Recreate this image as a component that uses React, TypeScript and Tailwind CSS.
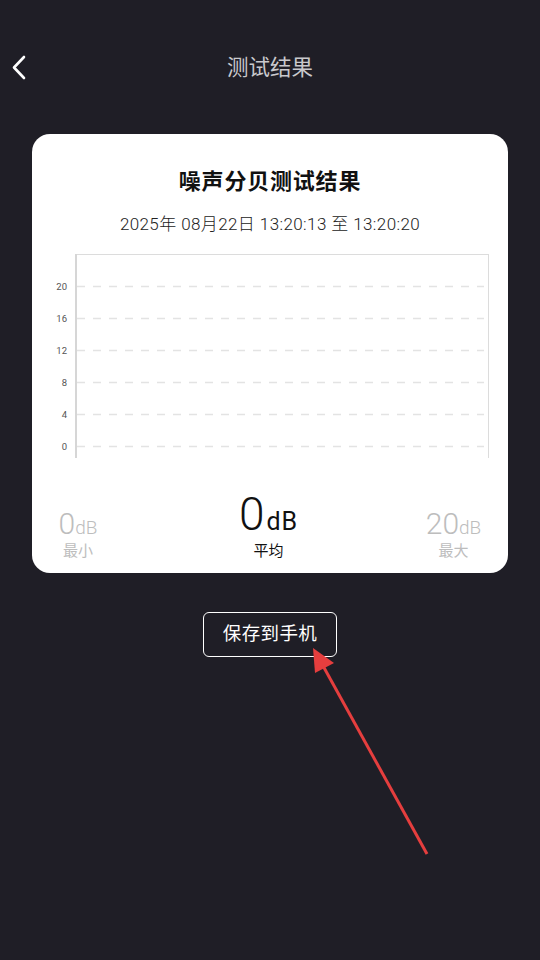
import React from "react";

const gridYs = [
  { v: "20", y: 36 },
  { v: "16", y: 68 },
  { v: "12", y: 100 },
  { v: "8", y: 132 },
  { v: "4", y: 164 },
  { v: "0", y: 196 },
];

function Chart() {
  return (
    <svg width="476" height="210" viewBox="0 0 476 210" className="block">
      <line x1="43.5" y1="4.5" x2="456.5" y2="4.5" stroke="#dcdcdc" strokeWidth="1" />
      <line x1="456.5" y1="4" x2="456.5" y2="208" stroke="#dcdcdc" strokeWidth="1" />
      <line x1="44" y1="4" x2="44" y2="208" stroke="#d6d6d6" strokeWidth="2" />
      {gridYs.map((g) => (
        <g key={g.v}>
          <line
            x1="45"
            y1={g.y + 0.5}
            x2="452"
            y2={g.y + 0.5}
            stroke="#e3e3e3"
            strokeWidth="1.5"
            strokeDasharray="8 8"
          />
          <text
            x="35"
            y={g.y + 3.5}
            textAnchor="end"
            fontSize="9.5"
            fill="#555555"
            fontFamily="Roboto, 'Liberation Sans', sans-serif"
          >
            {g.v}
          </text>
        </g>
      ))}
    </svg>
  );
}

export default function App() {
  return (
    <div
      className="relative w-[540px] h-[960px] bg-[#1f1e26] overflow-hidden"
      style={{ fontFamily: "Roboto, 'Noto Sans CJK SC', sans-serif" }}
    >
      {/* header */}
      <div className="relative pt-[48px] h-[88px]">
        <div className="absolute left-[11px] top-[54px]">
          <svg width="18" height="26" viewBox="0 0 18 26">
            <polyline
              points="13,3 3,13.5 13,24"
              fill="none"
              stroke="#ffffff"
              strokeWidth="2.6"
              strokeLinecap="round"
              strokeLinejoin="round"
            />
          </svg>
        </div>
        <div className="h-[40px] leading-[40px] text-center text-[21.5px] text-[#c9c9cd]">测试结果</div>
      </div>

      {/* card */}
      <div className="mx-auto mt-[46px] w-[476px] h-[439px] bg-white rounded-[18px] pt-[33px] flex flex-col">
        <div className="h-[30px] leading-[30px] text-center text-[22px] tracking-[0.8px] font-bold text-[#111111]">
          噪声分贝测试结果
        </div>
        <div className="mt-[15px] h-[24px] leading-[24px] text-center text-[17px] tracking-[0.4px] font-light text-[#222222]">
          2025年 08月22日 13:20:13 至 13:20:20
        </div>
        <div className="mt-[14px]">
          <Chart />
        </div>
        <div className="mt-[31px] px-[26px] flex justify-between items-end">
          <div className="flex flex-col items-center w-[40px]">
            <div className="flex items-baseline text-[#bdbdbd] font-light">
              <span className="text-[30px] leading-[34px]">0</span>
              <span className="text-[19px] leading-[34px]">dB</span>
            </div>
            <div className="-mt-[4px] text-[15px] leading-[20px] text-[#bdbdbd]">最小</div>
          </div>
          <div className="flex flex-col items-center pl-[14px]">
            <div className="flex items-baseline text-[#111111]">
              <span className="text-[46px] leading-[46px] font-light">0</span>
              <span className="ml-[2px] text-[25px] leading-[46px] font-normal tracking-[1px]">dB</span>
            </div>
            <div className="-mt-[4px] text-[15px] leading-[20px] text-[#111111]">平均</div>
          </div>
          <div className="flex flex-col items-center w-[57px]">
            <div className="flex items-baseline text-[#bdbdbd] font-light">
              <span className="text-[30px] leading-[34px]">20</span>
              <span className="text-[19px] leading-[34px]">dB</span>
            </div>
            <div className="-mt-[4px] text-[15px] leading-[20px] text-[#bdbdbd]">最大</div>
          </div>
        </div>
      </div>

      {/* button */}
      <div className="mt-[39px] flex justify-center">
        <div className="w-[134px] h-[45px] border border-white rounded-[6px] flex items-center justify-center text-[18.5px] tracking-[0.4px] text-white">
          保存到手机
        </div>
      </div>

      {/* annotation arrow */}
      <svg className="absolute left-0 top-0 pointer-events-none" width="540" height="960" viewBox="0 0 540 960">
        <line x1="427" y1="854" x2="322" y2="664" stroke="#e53e3e" strokeWidth="3" />
        <polygon points="313,648 315,673 334,663" fill="#e53e3e" />
      </svg>
    </div>
  );
}
